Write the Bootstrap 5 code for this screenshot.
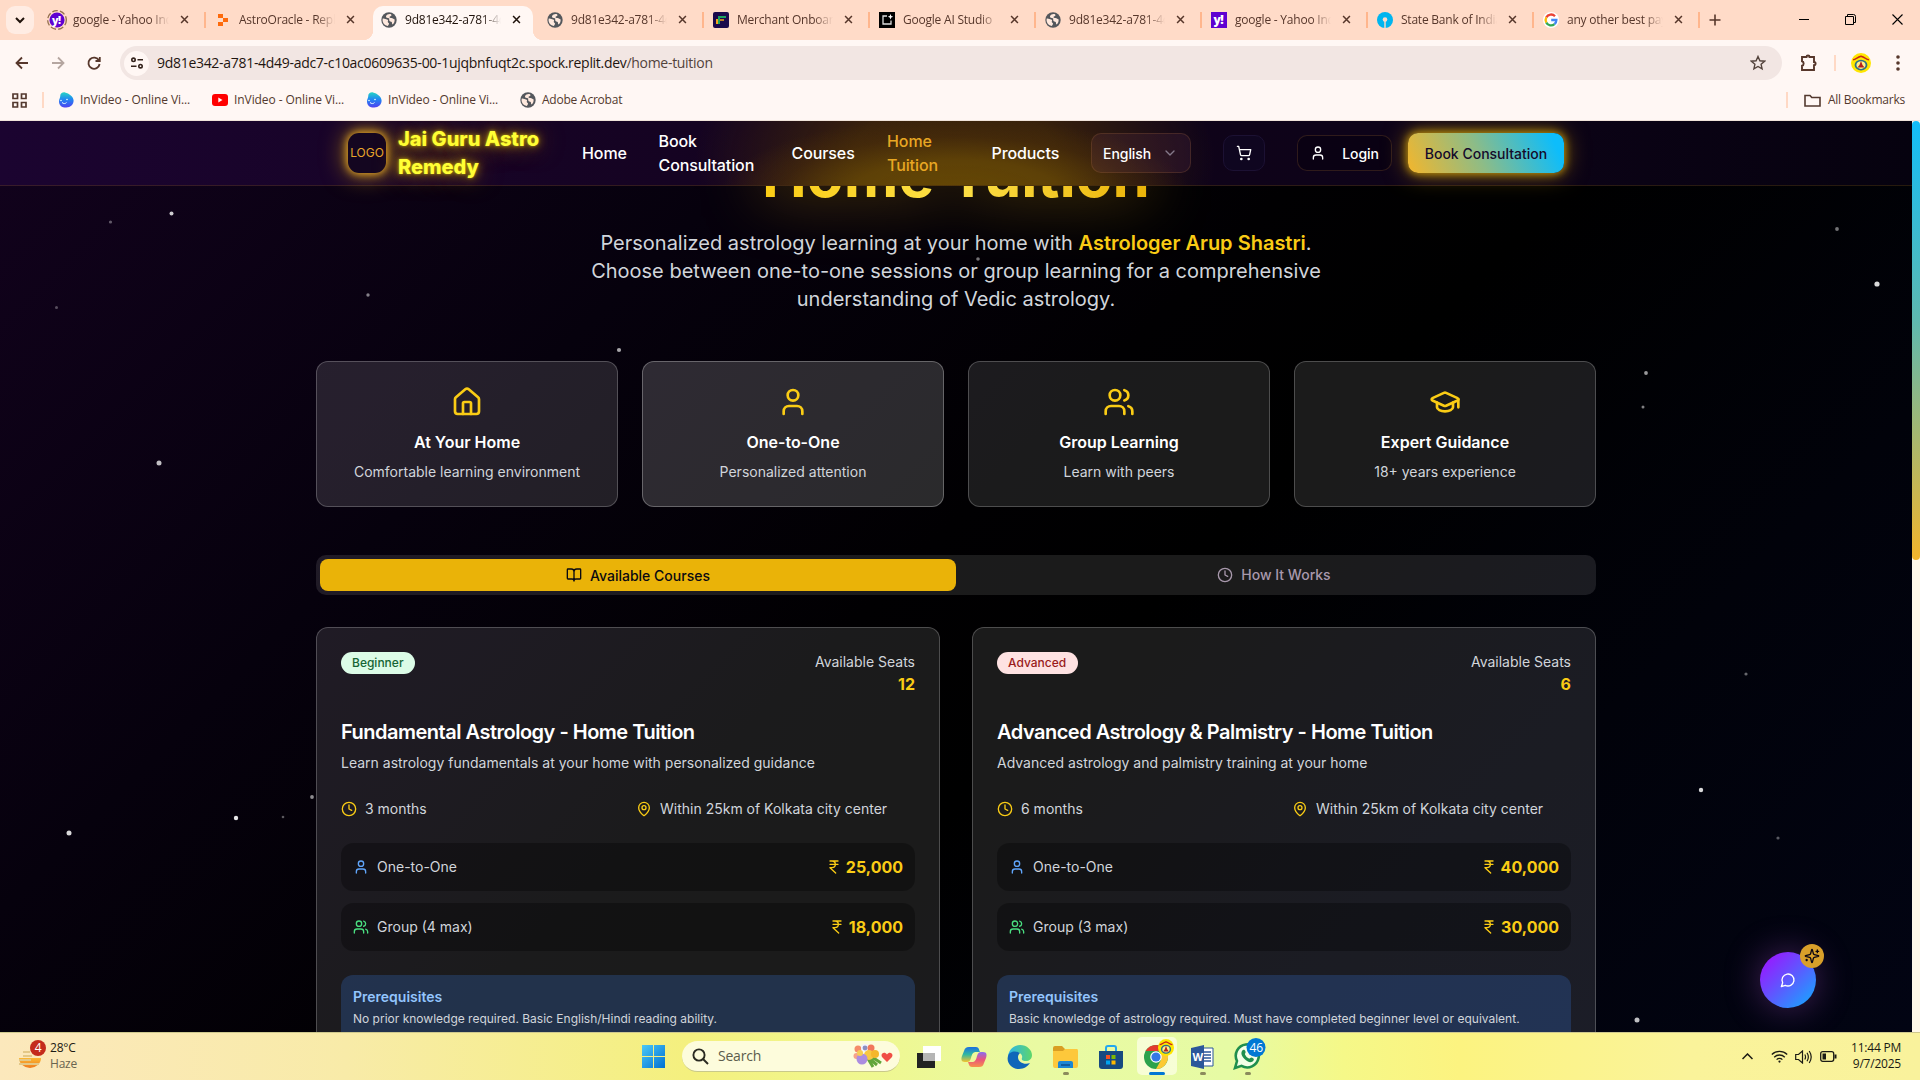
<!DOCTYPE html>
<html lang="en">
<head>
<meta charset="utf-8">
<title>Home Tuition - Jai Guru Astro Remedy</title>
<link href="https://cdn.jsdelivr.net/npm/bootstrap@5.3.0/dist/css/bootstrap.min.css" rel="stylesheet">
<style>
body{font-family:Inter,"Liberation Sans",sans-serif;width:1920px;height:1080px;overflow:hidden;background:#000;color:#fff}
svg{display:block;flex:none}
.ln{fill:none;stroke:currentColor;stroke-width:2;stroke-linecap:round;stroke-linejoin:round}
.ui{font-family:"Open Sans","Noto Sans",sans-serif;font-size:12px;letter-spacing:-.22px;line-height:16px}
/* browser chrome */
.chrome{height:121px;background:#fff7f4;flex:none;color:#57372b;border-bottom:1px solid #f0e3da}
.strip{height:40px;background:#ffdbc8;padding-left:6px}
.tabdrop{width:28px;height:28px;border-radius:9px;background:#ffece3;margin:6px 5px 0 0;color:#1f120b}
.btab{width:166px;height:40px;padding:0 10px 1px;border-radius:10px 10px 0 0;position:relative;flex:none}
.btab .lbl{width:96px;margin-left:8px;overflow:hidden;white-space:nowrap;-webkit-mask-image:linear-gradient(90deg,#000 80%,transparent)}
.btab .cls{margin-left:11px}
.btab::after{content:"";position:absolute;right:-1px;top:12px;width:2px;height:16px;background:#ffb68d}
.btab.nosep::after{display:none}
.btab.on{color:#1f120b}
.btab.on .face{position:absolute;left:2px;right:4px;top:6px;bottom:0;background:#fff7f4;border-radius:10px 10px 0 0}
.btab.on .face::before,.btab.on .face::after{content:"";position:absolute;bottom:0;width:10px;height:10px;background:radial-gradient(circle at 0 0,transparent 10px,#fff7f4 10.5px)}
.btab.on .face::before{left:-10px}
.btab.on .face::after{right:-10px;background:radial-gradient(circle at 100% 0,transparent 10px,#fff7f4 10.5px)}
.btab.on>*:not(.face){position:relative}
.tools{height:46px;padding:0 12px;background:#fff7f4}
.omni{width:1662px;height:34px;border-radius:17px;background:#f2e6e3;padding:0 16px 0 4px}
.sitebtn{width:25px;height:25px;border-radius:50%;background:#fff7f4}
.url{font-size:14px;letter-spacing:-.297px;color:#1f1510;margin-left:8px}
.url span{color:#53433c}
.marks{height:30px;padding:0 15px 2px 12px;color:#53392e}
.bm{width:154px}
.bm span{margin-left:2px;letter-spacing:-.08px}
.vsep{width:2px;height:16px;background:#ffd9c5}
/* page */
.stage{height:911px;flex:none;position:relative;overflow:hidden}
.page{width:1912px;height:911px;position:relative;overflow:hidden;background:linear-gradient(135deg,#12021d 0%,#06010d 28%,#010002 48%,#000 58%,#01020a 78%,#020413 100%)}
.stars{position:absolute;left:0;top:0}
.rail{width:8px;height:911px;background:#fff8e8}
.thumb{height:439px;border-radius:4px;background:linear-gradient(180deg,#12bdf8,#5db9b0 45%,#f3b52c)}
.topnav{position:absolute;left:0;top:0;width:1912px;height:65px;border-bottom:1px solid rgba(234,179,8,.14);z-index:5;
background:radial-gradient(ellipse 235px 78px at 955px 74px,rgba(104,74,4,.95) 0%,rgba(100,70,6,.85) 45%,rgba(80,50,8,.45) 75%,transparent 100%),radial-gradient(ellipse 260px 150px at 955px 40px,rgba(70,44,6,.75) 40%,transparent 100%),linear-gradient(90deg,#1b0430 0%,#150322 35%,#10031a 55%,#0d0318 75%,#06020f 100%)}
.wrap{width:1280px;margin:0 auto}
.topnav .wrap{padding:0 32px;height:64px}
.logo{width:38px;height:40px;border-radius:11px;background:#140620;color:#e9a62b;font-size:12px;box-shadow:0 0 8px 1px rgba(245,180,40,.95),0 0 24px 2px rgba(234,179,8,.6)}
.brandname{width:152px;margin:0 32px 0 12px;font-size:20px;line-height:28px;font-weight:800;color:#ffff35;text-shadow:0 0 3px rgba(255,255,0,.55),0 0 10px rgba(234,179,8,.8),0 0 26px rgba(234,179,8,.65)}
.lnk{font-size:16px;line-height:24px;font-weight:500;letter-spacing:-.1px;color:#fff;margin-right:32px;text-decoration:none;flex:none}
.pill{border:1px solid rgba(180,120,60,.22);border-radius:10px;font-size:14px;font-weight:500;flex:none;letter-spacing:-.05px}
.lang{width:100px;height:40px;background:rgba(120,60,100,.16);margin-right:32px;padding:0 12px 0 11px}
.cart{width:42px;height:36px;background:#0f0620;border-color:#1c1133;margin-right:32px}
.login{width:95px;height:36px;background:rgba(5,0,14,.5);margin-right:16px}
.cta{width:156px;height:40px;border-radius:10px;color:#140a2a;font-size:14px;font-weight:500;background:linear-gradient(65deg,#f3b62c 0%,#8ebc86 45%,#0dbdfb 92%);box-shadow:0 0 8px 1px rgba(234,179,8,.75),0 0 24px rgba(234,179,8,.55)}
/* the heading has scrolled under the bar: only the part below it is painted */
h1.hero{margin:0 0 24px;font-size:60px;line-height:60px;font-weight:700;text-align:center;filter:drop-shadow(0 0 30px rgba(250,190,10,.55));clip-path:inset(41px -200px -90px -200px)}
h1.hero span{background:linear-gradient(90deg,#facc15,#fde047 50%,#eab308);-webkit-background-clip:text;background-clip:text;color:transparent}
.intro{width:768px;margin:0 auto 48px;font-size:20px;line-height:28px;color:#d1d5db;text-align:center}
.gold{color:#facc15}
.glass{background:rgba(255,255,255,.105);border:1px solid rgba(255,255,255,.22);border-radius:12px}
.feat{width:302px;height:146px;padding:24px;text-align:center}
.feat h3{font-size:16px;line-height:24px;font-weight:600;margin:12px 0 8px}
.feat p{font-size:14px;line-height:20px;color:#d1d5db;margin:0}
.t1{background:rgba(255,255,255,.12)}.t2{background:rgba(255,255,255,.165);border-color:rgba(255,255,255,.28)}
.switch{height:40px;background:rgba(255,255,255,.105);border-radius:10px;padding:4px;margin:48px 0 32px;font-size:14px;font-weight:500}
.switch>div{border-radius:8px;width:636px;height:31px;color:#a898ac}
.switch>div.sel{height:32px;background:#eab308;color:#0a0a12}
.course{width:624px;height:460px;padding:24px;font-size:14px;line-height:20px;color:#d1d5db}
.lvl{height:22px;border-radius:11px;padding:0 11px;font-size:12px;line-height:22px;font-weight:500}
.lvl.g{background:#dcfce7;color:#166534}.lvl.r{background:#fee2e2;color:#991b1b;padding:0 11.500px 0 11px}
.course h2{font-size:20px;line-height:24px;letter-spacing:-.5px;font-weight:600;color:#fff;margin:24px 0 9px}
.half{width:279px}
.opt{height:48px;border-radius:12px;padding:0 12px;background:rgba(0,0,0,.3);margin-bottom:12px}
.price{font-size:16px;font-weight:700;gap:4px}
.pre{background:rgba(59,130,246,.22);border-radius:12px;height:90px;padding:12px;margin-top:24px}
.pre b{display:block;font-weight:600;color:#93c5fd}
.pre div{font-size:12px;line-height:16px;margin-top:4px}
.chat{position:absolute;left:1760px;top:831px;width:56px;height:56px;border-radius:50%;background:linear-gradient(135deg,#a010ff 5%,#6550ff 45%,#0eb0ff 100%);box-shadow:0 0 36px rgba(170,80,200,.42)}
.spark{position:absolute;left:40px;top:-8px;width:24px;height:24px;border-radius:50%;background:#d9a02a;color:#0b0614}
/* taskbar */
.task{height:48px;flex:none;position:relative;color:#1b1b14;border-top:1px solid #cfc98e;background:linear-gradient(90deg,#fce8bc 0%,#f8eba8 18%,#f4f07e 36%,#f0f78e 44%,#e9faa2 54%,#e6fba4 64%,#f5f888 70%,#fcf380 76%,#faf39a 88%,#f9f29c 100%)}
.task .side{width:640px}
.find{width:218px;height:31px;border-radius:16px;background:#fdfcdc;border-bottom:1px solid #c9c98a;font-size:14px;color:#5c5c4c;margin:0 6px 0 17px;padding:0 7px 0 10px}
.app{width:45.600px;height:47px;position:relative}
.app.run::after{content:"";position:absolute;left:20px;bottom:5px;width:6px;height:3px;border-radius:2px;background:#8b8b5c}
.app.act .plate{position:absolute;inset:4px 3px 5px;border-radius:5px;background:rgba(255,255,240,.65)}
.app.act::after{content:"";position:absolute;left:15px;bottom:5px;width:16px;height:3px;border-radius:2px;background:#0078d4}
.app svg{position:relative}
.when{line-height:16px;text-align:right;margin-top:-1px}
</style>
<script src="https://cdn.jsdelivr.net/npm/bootstrap@5.3.0/dist/js/bootstrap.bundle.min.js"></script>
</head>
<body class="d-flex flex-column">
<svg width="0" height="0" class="position-absolute">
<defs>
<symbol id="x" viewBox="0 0 10 10"><path d="M1.2 1.2l7.6 7.6M8.8 1.2L1.2 8.8" stroke="currentColor" stroke-width="1.7"/></symbol>
<symbol id="globe" viewBox="0 0 16 16"><circle cx="8" cy="8" r="7.7" fill="#54575c"/><path d="M1.8 6.5c2-.2 3 .8 4.2 1 1 .2 1.400 1 .8 1.900-.5.8 1 1 1.200 2 .1 1-.8 1.600-1.200 2.700C3.500 13.400 1.500 11 1.500 8zM6.500 2.500c2-1 4-.5 4 .7 0 1-1.800.8-2 1.800-.2.900 1 1 2 1 1.200 0 1.700 1 3 1.200.500 2-.4 4.300-1.900 5.400-.8-.5-.3-1.600-.9-2.500-.6-.8-2-.5-2.400-1.700-.3-1 .4-1.800-.5-2.200-1.300-.5-2.700-.2-2.800-1.500 0-1 .5-1.700 1.500-2.200z" fill="#ffe9de"/></symbol>
<symbol id="vid" viewBox="0 0 16 16"><path d="M7 .4c4 1 8.600 4 8.600 8.200 0 4-3 7-7.400 7C3.500 15.600 1 13 1 9.400 1 7 2.400 5.800 2.300 3.500 2.200 1.500 4.500 0 7 .4z" fill="url(#gv)"/><circle cx="3" cy="8.500" r=".8" fill="#e8ffff"/><circle cx="9" cy="7.500" r=".8" fill="#e8ffff"/><path d="M4 10.500c1.500 1.500 3.500 1.300 4.500 0" stroke="#e8ffff" fill="none"/></symbol>
<linearGradient id="gv" x1="0" y1="0" x2="0" y2="1"><stop offset="0" stop-color="#25d5c4"/><stop offset=".45" stop-color="#2089f2"/><stop offset="1" stop-color="#5040f0"/></linearGradient>
<symbol id="user" viewBox="0 0 24 24"><path d="M19 21v-2a4 4 0 0 0-4-4H9a4 4 0 0 0-4 4v2"/><circle cx="12" cy="7" r="4"/></symbol>
<symbol id="users" viewBox="0 0 24 24"><path d="M16 21v-2a4 4 0 0 0-4-4H6a4 4 0 0 0-4 4v2"/><circle cx="9" cy="7" r="4"/><path d="M22 21v-2a4 4 0 0 0-3-3.870M16 3.130a4 4 0 0 1 0 7.750"/></symbol>
<symbol id="clock" viewBox="0 0 24 24"><circle cx="12" cy="12" r="10"/><path d="M12 6v6l4 2"/></symbol>
<symbol id="pin" viewBox="0 0 24 24"><path d="M20 10c0 4.993-5.539 10.193-7.399 11.799a1 1 0 0 1-1.202 0C9.539 20.193 4 14.993 4 10a8 8 0 0 1 16 0"/><circle cx="12" cy="10" r="3"/></symbol>
<symbol id="rupee" viewBox="0 0 24 24"><path d="M6 3h12M6 8h12M6 13l8.500 8M6 13h3M9 13c6.667 0 6.667-10 0-10"/></symbol>
<symbol id="crest" viewBox="0 0 20 24" preserveAspectRatio="none"><ellipse cx="10" cy="12" rx="10" ry="12" fill="#ffe600"/><path d="M2 8c3 0 4-3 8-4 4 1 5 4 8 4" stroke="#c8261a" stroke-width="1.800" fill="none"/><circle cx="10" cy="14.500" r="5.500" fill="#fff08a" stroke="#2d7184" stroke-width="1.800"/><path d="M10 9.500l1.500 5 2 3h-7l2-3z" fill="#b5201b"/></symbol>
</defs></svg>

<header class="chrome ui">
  <div class="strip d-flex">
    <div class="tabdrop d-flex align-items-center justify-content-center"><svg width="10" height="7" viewBox="0 0 10 7"><path d="M1 1l4 4 4-4" fill="none" stroke="currentColor" stroke-width="2"/></svg></div>
    <div class="btab d-flex align-items-center"><svg width="20" height="20" viewBox="0 0 18 18" style="margin:0 -2px"><circle cx="9" cy="9" r="8.400" fill="none" stroke="#96704f" stroke-width="1.200" stroke-dasharray="5 2"/><circle cx="9" cy="9" r="6.800" fill="#5f01d1"/><text x="4.500" y="12.300" font-size="9.500" font-weight="800" letter-spacing="-.5" fill="#fff">y!</text></svg><span class="lbl">google - Yahoo India</span><svg class="cls" width="9" height="9"><use href="#x"/></svg></div>
    <div class="btab nosep d-flex align-items-center"><svg width="16" height="16" viewBox="0 0 16 16"><path d="M3 2h5v4H3zM8 6h5v4H8zM3 10h5v4H3z" fill="#fd6a0c"/></svg><span class="lbl">AstroOracle - Replit</span><svg class="cls" width="9" height="9"><use href="#x"/></svg></div>
    <div class="btab on nosep d-flex align-items-center"><span class="face"></span><svg width="16" height="16"><use href="#globe"/></svg><span class="lbl">9d81e342-a781-4d49</span><svg class="cls" width="9" height="9"><use href="#x"/></svg></div>
    <div class="btab d-flex align-items-center"><svg width="16" height="16"><use href="#globe"/></svg><span class="lbl">9d81e342-a781-4d49</span><svg class="cls" width="9" height="9"><use href="#x"/></svg></div>
    <div class="btab d-flex align-items-center"><svg width="16" height="16" viewBox="0 0 16 16"><rect width="16" height="16" rx="2" fill="#1b0a4c"/><path d="M4 12V7" stroke="#f5a51d" stroke-width="2"/><path d="M6 12V5h7" stroke="#1aa260" stroke-width="2" fill="none"/><path d="M7 8h4" stroke="#f5a51d" stroke-width="1.500"/></svg><span class="lbl">Merchant Onboarding</span><svg class="cls" width="9" height="9"><use href="#x"/></svg></div>
    <div class="btab d-flex align-items-center"><svg width="16" height="16" viewBox="0 0 16 16"><path d="M0 0h16v16H0z" fill="#000"/><path d="M8 4H4v8h8V8.500" stroke="#ddd" fill="none" stroke-width="1.300"/><path d="M11.500 2l.8 1.900 1.900.8-1.900.8-.8 1.900-.8-1.900-1.900-.8 1.900-.8z" fill="#fff"/></svg><span class="lbl">Google AI Studio</span><svg class="cls" width="9" height="9"><use href="#x"/></svg></div>
    <div class="btab d-flex align-items-center"><svg width="16" height="16"><use href="#globe"/></svg><span class="lbl">9d81e342-a781-4d49</span><svg class="cls" width="9" height="9"><use href="#x"/></svg></div>
    <div class="btab d-flex align-items-center"><svg width="16" height="16" viewBox="0 0 16 16"><path d="M0 0h16v16H0z" fill="#5f01d1"/><text x="2.500" y="11.500" font-size="12" font-weight="800" letter-spacing="-.5" fill="#fff">y!</text></svg><span class="lbl">google - Yahoo India</span><svg class="cls" width="9" height="9"><use href="#x"/></svg></div>
    <div class="btab d-flex align-items-center"><svg width="16" height="16" viewBox="0 0 16 16"><circle cx="8" cy="8" r="8" fill="#00b5ef"/><circle cx="8" cy="7.500" r="2.300" fill="#ffdbc8"/><path d="M7.300 8h1.400v8H7.300z" fill="#ffdbc8"/></svg><span class="lbl">State Bank of India</span><svg class="cls" width="9" height="9"><use href="#x"/></svg></div>
    <div class="btab d-flex align-items-center"><svg width="16" height="16" viewBox="0 0 16 16"><circle cx="8" cy="8" r="8" fill="#fff"/><g fill="none" stroke-width="2.300"><path d="M12 4.200A5.400 5.400 0 0 0 3.300 5.400" stroke="#ea4335"/><path d="M3.300 5.400a5.400 5.400 0 0 0 0 5.200" stroke="#fbbc05"/><path d="M3.300 10.600a5.400 5.400 0 0 0 8.200 1.500" stroke="#34a853"/><path d="M11.500 12.100A5.400 5.400 0 0 0 13.400 8H8.200" stroke="#4285f4"/></g></svg><span class="lbl">any other best payment</span><svg class="cls" width="9" height="9"><use href="#x"/></svg></div>
    <div class="d-flex align-items-center flex-fill" style="padding-bottom:1px">
      <svg width="12" height="12" viewBox="0 0 12 12" style="margin-left:10px"><path d="M6 .5v11M.5 6h11" stroke="#57372b" stroke-width="1.600"/></svg>
      <div class="d-flex align-items-center ms-auto text-black" style="gap:36px;padding-right:17px"><svg width="10" height="10"><path d="M0 4.500h10" stroke="currentColor"/></svg><svg width="11" height="11" viewBox="0 0 11 11"><path d="M.5 2.500h8v8h-8zM2.500 2V.5h6q2 0 2 2v6H9" fill="none" stroke="currentColor"/></svg><svg width="11" height="11" viewBox="0 0 11 11"><path d="M.5.5l10 10M10.500.5l-10 10" stroke="currentColor" stroke-width="1.100"/></svg></div>
    </div>
  </div>
  <div class="tools d-flex align-items-center">
    <svg width="20" height="20" viewBox="0 0 20 20" fill="none" stroke="currentColor" stroke-width="1.800"><path d="M16 10H4.500M10 4.500L4.500 10l5.500 5.500"/></svg>
    <svg class="ms-3" width="20" height="20" viewBox="0 0 20 20" fill="none" stroke="#b5a6a0" stroke-width="1.800"><path d="M4 10h11.500M10 4.500l5.500 5.500-5.500 5.500"/></svg>
    <svg class="ms-3" width="20" height="20" viewBox="0 0 20 20" fill="none" stroke="currentColor" stroke-width="1.800"><path d="M15 7.500A5.600 5.600 0 1 0 15.600 11M15.800 4v4h-4.300"/></svg>
    <div class="omni d-flex align-items-center" style="margin-left:16px">
      <div class="sitebtn d-flex align-items-center justify-content-center"><svg width="14" height="14" viewBox="0 0 14 14" fill="none" stroke="#33221b" stroke-width="1.600"><circle cx="3.500" cy="3.800" r="1.700"/><path d="M7.500 3.800H13M1 10.200h5.500"/><circle cx="10.500" cy="10.200" r="1.700"/></svg></div>
      <div class="url">9d81e342-a781-4d49-adc7-c10ac0609635-00-1ujqbnfuqt2c.spock.replit.dev<span>/home-tuition</span></div>
      <svg class="ms-auto" width="16" height="16" viewBox="0 0 16 16" fill="none" stroke="#53433c" stroke-width="1.400"><path d="M8 1.500l1.900 4.300 4.700.4-3.500 3.100 1 4.600L8 11.500l-4.100 2.400 1-4.600L1.400 6.200l4.700-.4z"/></svg>
    </div>
    <svg style="margin-left:17px" width="20" height="20" viewBox="0 0 20 20" fill="none" stroke="currentColor" stroke-width="1.900"><path d="M3 4h4.500a1.500 1.500 0 0 1 3 0H15v5a1.600 1.600 0 0 1 0 3.200V17H3v-4.200c2.200-.5 2.200-4 0-4.500z"/></svg>
    <div class="vsep" style="margin-left:15px"></div>
    <svg style="margin-left:15px" width="20" height="20"><use href="#crest" width="20" height="20"/></svg>
    <svg style="margin-left:25px" width="4" height="16" viewBox="0 0 4 16" fill="currentColor"><circle cx="2" cy="2" r="1.800"/><circle cx="2" cy="8" r="1.800"/><circle cx="2" cy="14" r="1.800"/></svg>
  </div>
  <div class="marks d-flex align-items-center">
    <svg width="15" height="15" viewBox="0 0 15 15" fill="none" stroke="#53392e" stroke-width="1.700"><path d="M1 1h4.500v4.500H1zM9.500 1H14v4.500H9.500zM1 9.500h4.500V14H1zM9.500 9.500H14V14H9.500z"/></svg>
    <div class="vsep" style="margin:0 14px 0 15px"></div>
    <div class="bm d-flex align-items-center"><svg width="16" height="16" class="me-1"><use href="#vid"/></svg><span>InVideo - Online Vi...</span></div>
    <div class="bm d-flex align-items-center"><svg width="16" height="16" viewBox="0 0 16 16" class="me-1"><rect y="2" width="16" height="12" rx="3" fill="#f00"/><path d="M6.300 5.500v5l4.200-2.500z" fill="#fff"/></svg><span>InVideo - Online Vi...</span></div>
    <div class="bm d-flex align-items-center"><svg width="16" height="16" class="me-1"><use href="#vid"/></svg><span>InVideo - Online Vi...</span></div>
    <div class="d-flex align-items-center"><svg width="16" height="16" style="margin-right:6px"><use href="#globe"/></svg><span>Adobe Acrobat</span></div>
    <div class="d-flex align-items-center ms-auto"><div class="vsep" style="margin-right:16px"></div><svg width="17" height="13" viewBox="0 0 17 13" style="margin-right:7px" fill="none" stroke="currentColor" stroke-width="1.600"><path d="M1 1.500h5l1.800 2H16V12H1z"/></svg><span>All Bookmarks</span></div>
  </div>
</header>

<main class="stage d-flex">
<div class="page">
  <svg class="stars" width="1912" height="911" viewBox="0 121 1912 911" fill="#fff">
    <circle cx="171.500" cy="213.500" r="2" opacity=".8"/><circle cx="110.500" cy="222" r="1.600" opacity=".35"/><circle cx="56.500" cy="307.500" r="1.500" opacity=".3"/><circle cx="368" cy="295" r="1.700" opacity=".5"/><circle cx="619" cy="350" r="2.100" opacity=".65"/><circle cx="159" cy="463" r="2.500" opacity=".75"/><circle cx="69" cy="833" r="2.500" opacity=".85"/><circle cx="236" cy="818" r="2.200" opacity=".9"/><circle cx="283" cy="817" r="1.300" opacity=".35"/><circle cx="312" cy="797" r="1.900" opacity=".55"/><circle cx="1837" cy="229" r="1.900" opacity=".45"/><circle cx="1877" cy="284" r="2.600" opacity=".85"/><circle cx="1646" cy="373" r="1.900" opacity=".6"/><circle cx="1643" cy="407" r="1.500" opacity=".5"/><circle cx="1746" cy="674" r="1.600" opacity=".4"/><circle cx="1701" cy="790" r="2.200" opacity=".85"/><circle cx="1778" cy="838" r="1.600" opacity=".35"/><circle cx="1637" cy="1020" r="2.500" opacity=".75"/><circle cx="978" cy="259" r="1.800" opacity=".45"/>
  </svg>
  <nav class="topnav">
    <div class="wrap d-flex align-items-center">
      <div class="logo d-flex align-items-center justify-content-center flex-shrink-0">LOGO</div>
      <div class="brandname flex-shrink-0">Jai Guru Astro Remedy</div>
      <a class="lnk" style="width:44.500px">Home</a>
      <a class="lnk" style="width:101px">Book Consultation</a>
      <a class="lnk" style="width:63.500px">Courses</a>
      <a class="lnk" style="width:72.500px;color:#e8a723">Home Tuition</a>
      <a class="lnk" style="width:67.500px">Products</a>
      <div class="pill lang d-flex align-items-center justify-content-between"><span>English</span><svg class="ln" width="16" height="16" viewBox="0 0 24 24" style="color:#85798a"><path d="M6 9l6 6 6-6"/></svg></div>
      <div class="pill cart d-flex align-items-center justify-content-center"><svg class="ln" width="16" height="16" viewBox="0 0 24 24"><circle cx="8" cy="21" r="1"/><circle cx="19" cy="21" r="1"/><path d="M2.050 2.050h2l2.660 12.420a2 2 0 0 0 2 1.580h9.780a2 2 0 0 0 1.950-1.570l1.650-7.430H5.120"/></svg></div>
      <div class="pill login d-flex align-items-center justify-content-center gap-3"><svg class="ln" width="16" height="16"><use href="#user"/></svg>Login</div>
      <div class="cta d-flex align-items-center justify-content-center flex-shrink-0">Book Consultation</div>
    </div>
  </nav>
  <div class="wrap position-relative" style="padding-top:24px">
    <h1 class="hero"><span>Home Tuition</span></h1>
    <p class="intro">Personalized astrology learning at your home with <span class="gold fw-semibold">Astrologer Arup Shastri</span>. Choose between one-to-one sessions or group learning for a comprehensive understanding of Vedic astrology.</p>
    <div class="d-flex gap-4">
      <div class="glass feat t1"><svg class="ln gold mx-auto" width="32" height="32" viewBox="0 0 24 24"><path d="M15 21v-8a1 1 0 0 0-1-1h-4a1 1 0 0 0-1 1v8"/><path d="M3 10a2 2 0 0 1 .709-1.528l7-5.999a2 2 0 0 1 2.582 0l7 5.999A2 2 0 0 1 21 10v9a2 2 0 0 1-2 2H5a2 2 0 0 1-2-2z"/></svg><h3>At Your Home</h3><p>Comfortable learning environment</p></div>
      <div class="glass feat t2"><svg class="ln gold mx-auto" width="32" height="32"><use href="#user"/></svg><h3>One-to-One</h3><p>Personalized attention</p></div>
      <div class="glass feat"><svg class="ln gold mx-auto" width="32" height="32"><use href="#users"/></svg><h3>Group Learning</h3><p>Learn with peers</p></div>
      <div class="glass feat"><svg class="ln gold mx-auto" width="32" height="32" viewBox="0 0 24 24"><path d="M21.420 10.922a1 1 0 0 0-.019-1.838L12.830 5.180a2 2 0 0 0-1.660 0L2.600 9.080a1 1 0 0 0 0 1.832l8.570 3.908a2 2 0 0 0 1.660 0z"/><path d="M22 10v6M6 12.500V16a6 3 0 0 0 12 0v-3.500"/></svg><h3>Expert Guidance</h3><p>18+ years experience</p></div>
    </div>
    <div class="switch d-flex">
      <div class="sel d-flex align-items-center justify-content-center gap-2"><svg class="ln" width="16" height="16" viewBox="0 0 24 24"><path d="M12 7v14M3 18a1 1 0 0 1-1-1V4a1 1 0 0 1 1-1h5a4 4 0 0 1 4 4 4 4 0 0 1 4-4h5a1 1 0 0 1 1 1v13a1 1 0 0 1-1 1h-6a3 3 0 0 0-3 3 3 3 0 0 0-3-3z"/></svg>Available Courses</div>
      <div class="d-flex align-items-center justify-content-center gap-2"><svg class="ln" width="16" height="16"><use href="#clock"/></svg>How It Works</div>
    </div>
    <div class="d-flex" style="gap:32px">
      <section class="glass course">
        <div class="d-flex justify-content-between align-items-start"><span class="lvl g">Beginner</span><div class="text-end">Available Seats<div class="gold fw-bold fs-6 lh-base">12</div></div></div>
        <h2>Fundamental Astrology - Home Tuition</h2>
        <div>Learn astrology fundamentals at your home with personalized guidance</div>
        <div class="d-flex gap-3" style="margin:26px 0 24px"><div class="half d-flex gap-2 align-items-center"><svg class="ln gold" width="16" height="16"><use href="#clock"/></svg>3 months</div><div class="half d-flex gap-2 align-items-center"><svg class="ln gold" width="16" height="16"><use href="#pin"/></svg>Within 25km of Kolkata city center</div></div>
        <div class="opt d-flex align-items-center gap-2"><svg class="ln" style="color:#60a5fa" width="16" height="16"><use href="#user"/></svg>One-to-One<span class="price gold d-flex align-items-center ms-auto"><svg class="ln" width="16" height="16"><use href="#rupee"/></svg>25,000</span></div>
        <div class="opt d-flex align-items-center gap-2"><svg class="ln" style="color:#4ade80" width="16" height="16"><use href="#users"/></svg>Group (4 max)<span class="price gold d-flex align-items-center ms-auto"><svg class="ln" width="16" height="16"><use href="#rupee"/></svg>18,000</span></div>
        <div class="pre"><b>Prerequisites</b><div>No prior knowledge required. Basic English/Hindi reading ability.</div></div>
      </section>
      <section class="glass course">
        <div class="d-flex justify-content-between align-items-start"><span class="lvl r">Advanced</span><div class="text-end">Available Seats<div class="gold fw-bold fs-6 lh-base">6</div></div></div>
        <h2>Advanced Astrology &amp; Palmistry - Home Tuition</h2>
        <div>Advanced astrology and palmistry training at your home</div>
        <div class="d-flex gap-3" style="margin:26px 0 24px"><div class="half d-flex gap-2 align-items-center"><svg class="ln gold" width="16" height="16"><use href="#clock"/></svg>6 months</div><div class="half d-flex gap-2 align-items-center"><svg class="ln gold" width="16" height="16"><use href="#pin"/></svg>Within 25km of Kolkata city center</div></div>
        <div class="opt d-flex align-items-center gap-2"><svg class="ln" style="color:#60a5fa" width="16" height="16"><use href="#user"/></svg>One-to-One<span class="price gold d-flex align-items-center ms-auto"><svg class="ln" width="16" height="16"><use href="#rupee"/></svg>40,000</span></div>
        <div class="opt d-flex align-items-center gap-2"><svg class="ln" style="color:#4ade80" width="16" height="16"><use href="#users"/></svg>Group (3 max)<span class="price gold d-flex align-items-center ms-auto"><svg class="ln" width="16" height="16"><use href="#rupee"/></svg>30,000</span></div>
        <div class="pre"><b>Prerequisites</b><div>Basic knowledge of astrology required. Must have completed beginner level or equivalent.</div></div>
      </section>
    </div>
  </div>
  <div class="chat d-flex align-items-center justify-content-center"><svg class="ln" width="16" height="16" viewBox="0 0 24 24"><path d="M7.900 20A9 9 0 1 0 4 16.100L2 22Z"/></svg>
    <div class="spark d-flex align-items-center justify-content-center"><svg class="ln" width="16" height="16" viewBox="0 0 24 24"><path d="M9.937 15.500A2 2 0 0 0 8.500 14.063l-6.135-1.582a.5.5 0 0 1 0-.962L8.500 9.936A2 2 0 0 0 9.937 8.500l1.582-6.135a.5.5 0 0 1 .963 0L14.063 8.500A2 2 0 0 0 15.500 9.937l6.135 1.581a.5.5 0 0 1 0 .964L15.500 14.063a2 2 0 0 0-1.437 1.437l-1.582 6.135a.5.5 0 0 1-.963 0zM20 3v4M22 5h-4M4 17v2M5 18H3"/></svg></div></div>
</div>
<div class="rail"><div class="thumb"></div></div>
</main>

<footer class="task ui d-flex align-items-center">
  <div class="side d-flex align-items-center" style="padding-left:18px">
    <svg width="28" height="30" viewBox="0 0 28 30" style="margin-top:-3px"><defs><linearGradient id="sun" x1="0" y1="0" x2="0" y2="1"><stop offset="0" stop-color="#fbb934"/><stop offset="1" stop-color="#f07a1c"/></linearGradient></defs><path d="M1 18h22a11 10 0 0 1-22 0z" fill="url(#sun)"/><path d="M5 12h7M5 16h9M1 20h12M1 24h20" stroke="#e3c888" stroke-width="2"/><circle cx="20" cy="8" r="8" fill="#c42b1c"/><text x="16.700" y="12.400" font-size="12" fill="#fff">4</text></svg>
    <div style="margin-left:4px;margin-top:-2px;line-height:16px">28°C<br><span style="color:#6a644f">Haze</span></div>
  </div>
  <svg width="23" height="23" viewBox="0 0 23 23" style="margin-left:2px"><defs><linearGradient id="win" x1="0" y1="0" x2="1" y2="1"><stop offset="0" stop-color="#4cc9f8"/><stop offset="1" stop-color="#0070d2"/></linearGradient></defs><path d="M0 0h11v11H0zM12 0h11v11H12zM0 12h11v11H0zM12 12h11v11H12z" fill="url(#win)"/></svg>
  <div class="find d-flex align-items-center"><svg width="17" height="17" viewBox="0 0 17 17" fill="none" stroke="#2b2b22" stroke-width="1.900"><circle cx="7" cy="7" r="5.600"/><path d="M11 11l5 5"/></svg><span style="margin-left:9px">Search</span>
    <svg class="ms-auto" width="40" height="26" viewBox="0 0 40 26"><path d="M17 16l7 6M14 14l6 10M19 14l9 6" stroke="#62a53a" stroke-width="3"/><circle cx="5" cy="6" r="3.500" fill="#f58b6a"/><circle cx="3.500" cy="13" r="3" fill="#f7a38a"/><circle cx="12" cy="5" r="4" fill="#f2f2ff"/><circle cx="12" cy="5" r="2.400" fill="#8b8fc0"/><circle cx="18" cy="5" r="3.500" fill="#f2775c"/><circle cx="16" cy="12" r="5" fill="#f8c743"/><circle cx="22" cy="11" r="4" fill="#f5b72a"/><circle cx="9" cy="16" r="5.500" fill="#ac8de0"/><circle cx="7" cy="10" r="3" fill="#f6ce55"/><path d="M34 19l-5-5c-2-4 3-6 5-2.500 2-3.500 7-1.500 5 2.500z" fill="#f04e45"/></svg></div>
  <div class="app d-flex align-items-center justify-content-center"><svg width="24" height="24" viewBox="0 0 24 24"><path d="M6 1h18v15H6z" fill="#fff"/><path d="M0 8h18v15H0z" fill="#222"/><path d="M6 8h12v8H6z" fill="#b5b5b5"/></svg></div>
  <div class="app d-flex align-items-center justify-content-center"><svg width="26" height="24" viewBox="0 0 26 24"><defs><linearGradient id="c1" x1="0" y1="0" x2="0" y2="1"><stop offset="0" stop-color="#1b6ee0"/><stop offset=".5" stop-color="#2fb8a0"/><stop offset="1" stop-color="#f5c22c"/></linearGradient><linearGradient id="c2" x1="0" y1="0" x2="0" y2="1"><stop offset="0" stop-color="#8a6cf0"/><stop offset=".5" stop-color="#e8557d"/><stop offset="1" stop-color="#f8914a"/></linearGradient></defs><path d="M8 2h7c3 0 3 3 4 5h-4c-3 0-4 2-5 6-1 3-2 4-4 4H4c-4 0-4-3-3-6l2-5c1-3 2-4 5-4z" fill="url(#c1)"/><path d="M18 22h-7c-3 0-3-3-4-5h4c3 0 4-2 5-6 1-3 2-4 4-4h2c4 0 4 3 3 6l-2 5c-1 3-2 4-5 4z" fill="url(#c2)"/></svg></div>
  <div class="app d-flex align-items-center justify-content-center"><svg width="25" height="24" viewBox="0 0 25 24"><defs><linearGradient id="e1"><stop offset="0" stop-color="#2ab4ea"/><stop offset="1" stop-color="#5fd66a"/></linearGradient></defs><path d="M1 11C2 4 7 0 13 0c7 0 12 5 12 10 0 4-3 6-6 6s-5-1-4-3c1-3-2-6-6-6-3 0-6 1-8 4z" fill="url(#e1)"/><path d="M1 11c-2 7 4 13 11 13 5 0 9-3 11-6-5 2-12 0-12-6 0-2 1-3 2-4-5-3-11-1-12 3z" fill="#0f66b9"/></svg></div>
  <div class="app run d-flex align-items-center justify-content-center"><svg width="25" height="22" viewBox="0 0 25 22"><path d="M0 2q0-2 2-2h7l3 3h12v6H0z" fill="#d99e22"/><path d="M0 5h10l2-2h12q1 0 1 2v15q0 2-2 2H2q-2 0-2-2z" fill="#fdc83b"/><path d="M5 22v-5q0-2 2-2h11q2 0 2 2v5z" fill="#1b86d4"/><path d="M8 19h9" stroke="#0d5ba0" stroke-width="2"/></svg></div>
  <div class="app d-flex align-items-center justify-content-center"><svg width="24" height="24" viewBox="0 0 24 24"><path d="M7 7V3q0-2 2-2h6q2 0 2 2v4" fill="none" stroke="#22a7ef" stroke-width="2"/><path d="M0 6h24v15q0 3-3 3H3q-3 0-3-3z" fill="#164a80"/><path d="M7 10h4v4H7z" fill="#f25022"/><path d="M12.500 10h4v4h-4z" fill="#7fba00"/><path d="M7 15.500h4v4H7z" fill="#00a4ef"/><path d="M12.500 15.500h4v4h-4z" fill="#ffb900"/></svg></div>
  <div class="app act d-flex align-items-center justify-content-center"><div class="plate"></div><svg width="34" height="32" viewBox="0 0 34 32" style="margin-top:-6px"><circle cx="16" cy="19" r="12" fill="#2ba24c"/><path d="M16 19l10.400-6A12 12 0 0 1 16 31l5-9z" fill="#fcc934"/><path d="M5.600 13a12 12 0 0 1 20.800 0H16z" fill="#e33b2e"/><circle cx="16" cy="19" r="5.800" fill="#fff"/><circle cx="16" cy="19" r="4.600" fill="#3478e5"/><use href="#crest" x="18" y="1" width="16" height="17"/></svg></div>
  <div class="app run d-flex align-items-center justify-content-center"><svg width="23" height="24" viewBox="0 0 23 24"><path d="M10 3h12v18H10z" fill="#fff" stroke="#2b579a"/><path d="M13 7h7M13 10h7M13 13h7M13 16h7" stroke="#2b579a" stroke-width="1.400"/><path d="M0 3l13-3v24L0 21z" fill="#2b579a"/><text x="1.500" y="16" font-size="11" font-weight="700" fill="#fff">W</text></svg></div>
  <div class="app run d-flex align-items-center justify-content-center"><svg width="34" height="32" viewBox="0 0 34 32" style="margin:-5px 0 0 2px"><path d="M3 30l2-7a11.500 11.500 0 1 1 4.500 4.800z" fill="#f4ffe6" stroke="#1f8f4d" stroke-width="2.600"/><path d="M10 13c1-2 3-1.500 3.500.5.500 1.500-1 2-.5 3 1 2 2 3 4 4 1 .3 1.500-1.200 2.500-1 2 .8 3 1.500 2 3-2 3-6 1.500-9-1.500-2.500-2.500-4-5.500-2.500-8z" fill="#1f8f4d"/><circle cx="24" cy="9.500" r="9.500" fill="#0078d4"/><text x="17.600" y="13.600" font-size="12" fill="#fff">46</text></svg></div>
  <div class="ms-auto d-flex align-items-center" style="padding-right:19px">
    <svg width="11" height="7" viewBox="0 0 11 7" fill="none" stroke="currentColor" stroke-width="1.500"><path d="M.5 6l5-5 5 5"/></svg>
    <svg style="margin-left:18px" width="17" height="13" viewBox="0 0 17 13" fill="none" stroke="currentColor" stroke-width="1.300"><path d="M.8 4.500a11 11 0 0 1 15.400 0M3.200 7.200a7.500 7.500 0 0 1 10.600 0M5.600 9.600a4.200 4.200 0 0 1 5.800 0"/><circle cx="8.500" cy="11.600" r="1.100" fill="currentColor" stroke="none"/></svg>
    <svg style="margin-left:7px" width="17" height="14" viewBox="0 0 17 14" fill="none" stroke="currentColor" stroke-width="1.200"><path d="M.7 4.500h2.800L7.500 1v12L3.500 9.500H.7zM9.800 4.500q1.500 2.500 0 5M12 2.700q2.700 4.300 0 8.600M14.200 1q4 6 0 12"/></svg>
    <svg style="margin-left:8px" width="17" height="11" viewBox="0 0 17 11"><rect x=".7" y=".7" width="13" height="9.600" rx="2" fill="none" stroke="currentColor" stroke-width="1.300"/><path d="M2.500 2.500H6v6H2.500zM14.500 3.500h2v4h-2z" fill="currentColor"/></svg>
    <div class="when" style="margin-left:14.500px">11:44 PM<br>9/7/2025</div>
  </div>
</footer>
</body>
</html>
